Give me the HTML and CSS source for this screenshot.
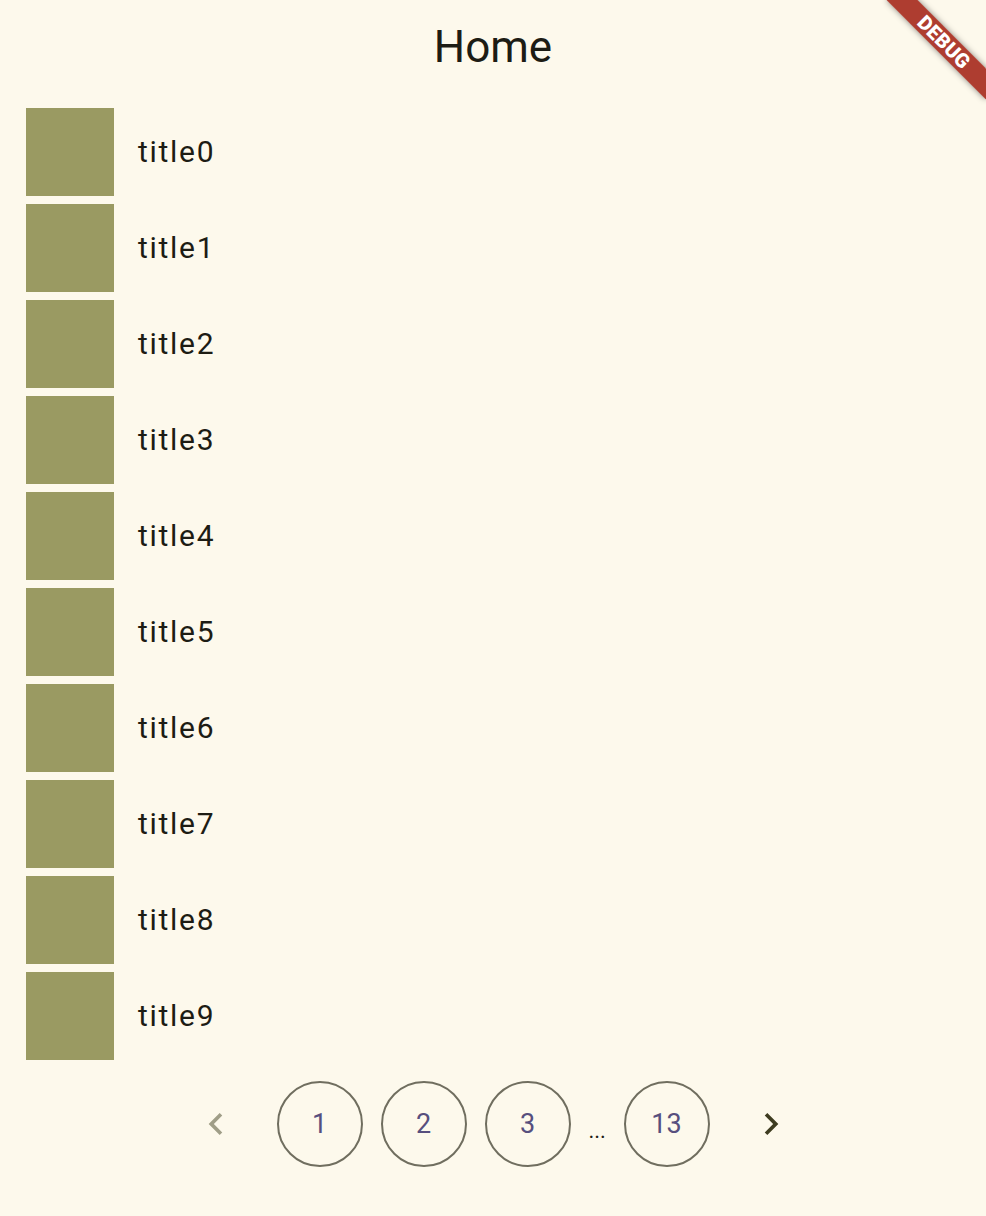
FILE: index.html
```html
<!DOCTYPE html>
<html lang="en">
<head>
<meta charset="utf-8">
<title>Home</title>
<link rel="stylesheet" href="styles.css">
</head>
<body>
<div class="app">
  <header class="appbar"><h1 class="appbar-title">Home</h1></header>
  <ul class="list">
    <li class="tile"><span class="thumb"></span><span class="tile-title">title0</span></li>
    <li class="tile"><span class="thumb"></span><span class="tile-title">title1</span></li>
    <li class="tile"><span class="thumb"></span><span class="tile-title">title2</span></li>
    <li class="tile"><span class="thumb"></span><span class="tile-title">title3</span></li>
    <li class="tile"><span class="thumb"></span><span class="tile-title">title4</span></li>
    <li class="tile"><span class="thumb"></span><span class="tile-title">title5</span></li>
    <li class="tile"><span class="thumb"></span><span class="tile-title">title6</span></li>
    <li class="tile"><span class="thumb"></span><span class="tile-title">title7</span></li>
    <li class="tile"><span class="thumb"></span><span class="tile-title">title8</span></li>
    <li class="tile"><span class="thumb"></span><span class="tile-title">title9</span></li>
  </ul>
  <nav class="pager">
    <span class="nav-btn nav-disabled">
      <svg viewBox="0 0 24 24" width="44" height="44"><path d="M15.41 7.41L14 6l-6 6 6 6 1.41-1.41L10.83 12z"/></svg>
    </span>
    <span class="page">1</span>
    <span class="page">2</span>
    <span class="page">3</span>
    <span class="dots">...</span>
    <span class="page">13</span>
    <span class="nav-btn">
      <svg viewBox="0 0 24 24" width="44" height="44"><path d="M10 6L8.59 7.41 13.17 12l-4.58 4.59L10 18l6-6z"/></svg>
    </span>
  </nav>
  <div class="debug-banner">DEBUG</div>
</div>
</body>
</html>
```
FILE: styles.css
```css
html, body {
  margin: 0;
  padding: 0;
}
body {
  background: #fdf9ec;
  font-family: Roboto, "Liberation Sans", sans-serif;
  color: #1d1c14;
}
.app {
  position: relative;
  width: 986px;
  height: 1216px;
  overflow: hidden;
}
.appbar {
  height: 94px;
  display: flex;
  align-items: center;
  justify-content: center;
}
.appbar-title {
  margin: 0;
  font-size: 44px;
  font-weight: 400;
  line-height: 1;
  color: #1d1c14;
}
.list {
  list-style: none;
  margin: 14px 0 0 0;
  padding: 0 0 0 26px;
  display: flex;
  flex-direction: column;
  gap: 8px;
}
.tile {
  display: flex;
  align-items: center;
  height: 88px;
}
.thumb {
  width: 88px;
  height: 88px;
  background: #9a9a62;
  flex: none;
}
.tile-title {
  margin-left: 24px;
  margin-bottom: 2px;
  font-size: 30px;
  letter-spacing: 1.7px;
  color: #1d1c14;
}
.pager {
  margin-top: 21px;
  display: flex;
  justify-content: center;
  align-items: center;
  gap: 18px;
}
.nav-btn {
  width: 86px;
  height: 86px;
  display: flex;
  align-items: center;
  justify-content: center;
}
.nav-btn svg {
  fill: #3e3c20;
}
.nav-btn.nav-disabled svg {
  fill: #a09e88;
}
.page {
  width: 86px;
  height: 86px;
  box-sizing: border-box;
  border: 2px solid #706e5f;
  border-radius: 50%;
  display: flex;
  align-items: center;
  justify-content: center;
  font-size: 27px;
  color: #574f7e;
}
.dots {
  width: 17px;
  font-size: 22px;
  text-align: center;
  padding-top: 12px;
  color: #1d1c14;
}
.debug-banner {
  position: absolute;
  left: 874px;
  top: 31px;
  width: 140px;
  height: 22px;
  transform: rotate(45deg);
  background: rgba(165, 40, 28, 0.9);
  box-shadow: 0 0 6px rgba(0, 0, 0, 0.45);
  color: #ffffff;
  font-family: Roboto, "Liberation Sans", sans-serif;
  font-weight: 900;
  font-size: 20px;
  line-height: 22px;
  text-align: center;
  letter-spacing: 0.3px;
}
```
